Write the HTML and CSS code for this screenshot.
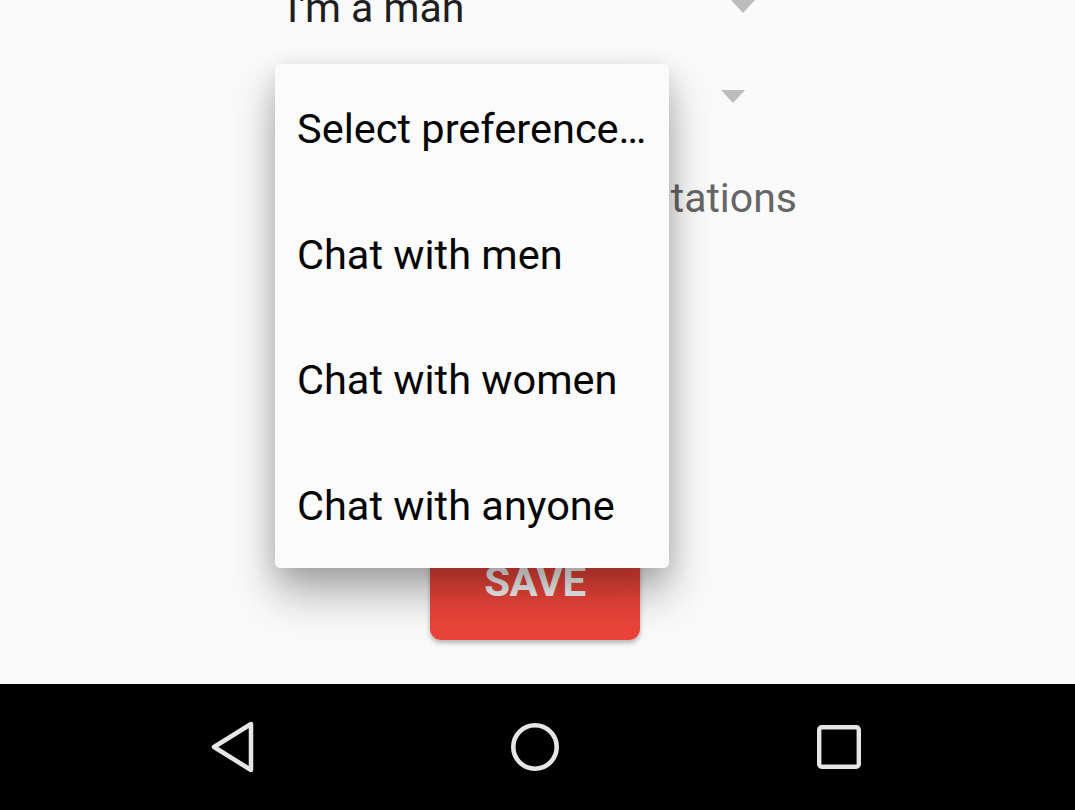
FILE: index.html
```html
<!DOCTYPE html>
<html lang="en">
<head>
<meta charset="utf-8">
<title>Preferences</title>
<link rel="stylesheet" href="styles.css">
</head>
<body>
<div class="screen">
  <div class="content">
    <div class="form">
      <div class="row row-gender">
        <span class="value">I'm a man</span>
        <span class="caret"></span>
      </div>
      <div class="row row-pref">
        <span class="value">Chat with women</span>
        <span class="caret"></span>
      </div>
      <div class="row row-invite">
        <span class="label">Receive chat invitations</span>
      </div>
      <button class="save">SAVE</button>
    </div>
    <ul class="menu">
      <li class="item">Select preference…</li>
      <li class="item">Chat with men</li>
      <li class="item">Chat with women</li>
      <li class="item">Chat with anyone</li>
    </ul>
  </div>
  <div class="gap"></div>
  <nav class="navbar">
    <span class="nav-btn">
      <svg width="60" height="60" viewBox="0 0 60 60"><path d="M50 7 L50 53 L13 30 Z" fill="none" stroke="#e6e6e6" stroke-width="4.5" stroke-linejoin="round"/></svg>
    </span>
    <span class="nav-btn">
      <svg width="60" height="60" viewBox="0 0 60 60"><circle cx="30" cy="30" r="21.7" fill="none" stroke="#e6e6e6" stroke-width="4.6"/></svg>
    </span>
    <span class="nav-btn">
      <svg width="60" height="60" viewBox="0 0 60 60"><rect x="10.2" y="10.2" width="39.6" height="39.6" rx="2.5" fill="none" stroke="#e6e6e6" stroke-width="4.4"/></svg>
    </span>
  </nav>
</div>
</body>
</html>
```
FILE: styles.css
```css
html, body {
  margin: 0;
  padding: 0;
}
body {
  width: 1075px;
  height: 810px;
  overflow: hidden;
  background: #fafafa;
  font-family: Roboto, "Liberation Sans", sans-serif;
}
.screen {
  display: flex;
  flex-direction: column;
  height: 810px;
}
.content {
  position: relative;
  height: 652px;
  overflow: hidden;
  flex: none;
}
.form {
  display: flex;
  flex-direction: column;
  align-items: flex-start;
  padding-left: 282px;
}
.row {
  display: flex;
  align-items: center;
  justify-content: space-between;
  height: 48px;
  font-size: 41px;
  line-height: 48px;
}
.row-gender {
  margin-top: -16px;
  width: 473px;
  color: #1e1e1e;
}
.row-gender .value {
  padding-left: 5px;
}
.row-gender .caret {
  margin-top: -3px;
}
.row-pref {
  margin-top: 40px;
  width: 463px;
  color: #1e1e1e;
}
.row-invite {
  margin-top: 54px;
  width: 515px;
  justify-content: flex-end;
  color: #666666;
}
.caret {
  width: 0;
  height: 0;
  border-left: 12.5px solid transparent;
  border-right: 12.5px solid transparent;
  border-top: 13px solid #bdbdbd;
}
.save {
  margin-top: 298px;
  margin-left: 148px;
  width: 210px;
  height: 120px;
  border: none;
  border-radius: 11px;
  background: linear-gradient(#f4473c, #ea443a);
  box-shadow: 0 3px 5px rgba(0, 0, 0, 0.28);
  color: #fafafa;
  font-family: Roboto, "Liberation Sans", sans-serif;
  font-weight: 700;
  font-size: 42px;
  letter-spacing: -0.5px;
  padding: 0;
  padding-top: 2px;
}
.menu {
  position: absolute;
  left: 275px;
  top: 64px;
  width: 394px;
  margin: 0;
  padding: 2px 0 0;
  list-style: none;
  background: #fbfbfb;
  border-radius: 5px;
  box-shadow: 0 26px 44px rgba(0, 0, 0, 0.3), 0 6px 24px rgba(0, 0, 0, 0.12);
}
.item {
  height: 125.5px;
  line-height: 125.5px;
  padding-left: 22px;
  font-size: 41.5px;
  color: #050505;
  white-space: nowrap;
}
.gap {
  height: 32px;
  flex: none;
}
.navbar {
  flex: 1;
  background: #000;
  display: flex;
  align-items: center;
  padding-left: 201px;
  gap: 244px;
}
.nav-btn {
  width: 60px;
  height: 60px;
  display: flex;
}
```
